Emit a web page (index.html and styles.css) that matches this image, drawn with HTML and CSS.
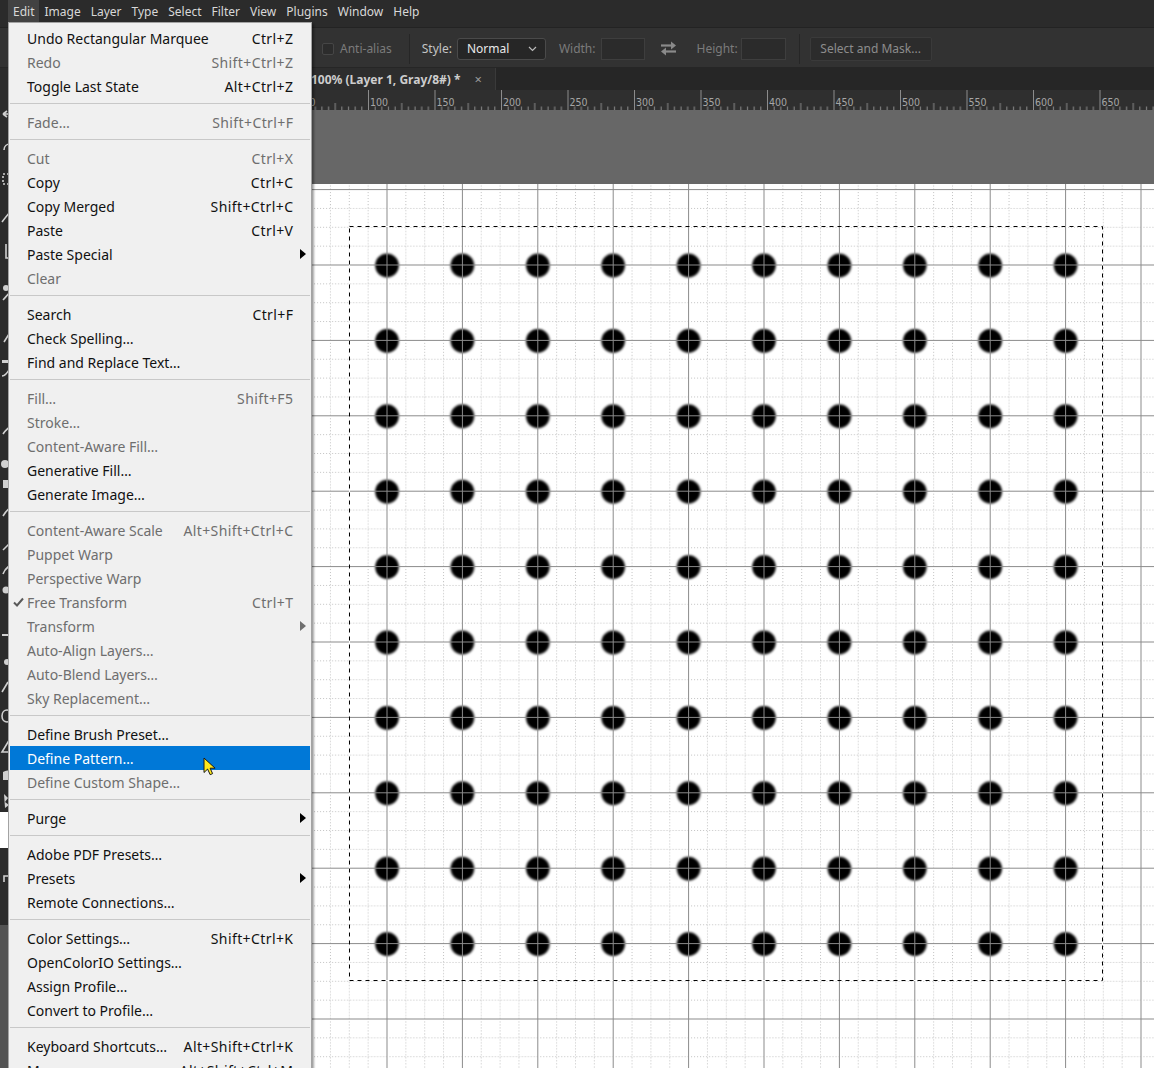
FILE: index.html
```html
<!DOCTYPE html>
<html lang="en">

<head>
    <meta charset="UTF-8">
    <title>Edit menu - Define Pattern</title>
    <link rel="stylesheet" href="styles.css">
</head>

<body>
    <div class="app">
        <div class="menubar">
            <div class="menubar-item open">Edit</div>
            <div class="menubar-item">Image</div>
            <div class="menubar-item">Layer</div>
            <div class="menubar-item">Type</div>
            <div class="menubar-item">Select</div>
            <div class="menubar-item">Filter</div>
            <div class="menubar-item">View</div>
            <div class="menubar-item">Plugins</div>
            <div class="menubar-item">Window</div>
            <div class="menubar-item">Help</div>
        </div>

        <div class="options">
            <span class="checkbox"></span>
            <span class="opt-label dim">Anti-alias</span>
            <span class="opt-divider"></span>
            <span class="opt-label">Style:</span>
            <div class="select">
                <span>Normal</span>
                <svg width="9" height="6" viewBox="0 0 9 6"><path d="M1 1l3.5 3.5L8 1" fill="none" stroke="#bbb" stroke-width="1.2"/></svg>
            </div>
            <span class="opt-label dim gap-l">Width:</span>
            <span class="field field-w"></span>
            <svg class="swap" width="17" height="15" viewBox="0 0 17 15">
                <path d="M1 4.5h12" stroke="#8a8a8a" stroke-width="2.2"/>
                <path d="M11 0.5l5 4-5 4z" fill="#8a8a8a"/>
                <path d="M16 10.5H4" stroke="#8a8a8a" stroke-width="2.2"/>
                <path d="M6 6.5l-5 4 5 4z" fill="#8a8a8a"/>
            </svg>
            <span class="opt-label dim gap-h">Height:</span>
            <span class="field field-h"></span>
            <span class="opt-divider last"></span>
            <div class="mask-button">Select and Mask...</div>
        </div>

        <div class="workspace">
            <div class="tools">
                <svg width="40" height="860" viewBox="0 0 40 860">
                    <g fill="none" stroke="#d0d0d0" stroke-width="1.6">
                        <path d="M3 10l4-3M3 10l4 3M3 10h14"/>
                        <path d="M4 46c0-8 12-8 12 0"/>
                        <path d="M3 70h12v10H3z" stroke-dasharray="2 2"/>
                        <path d="M2 118c3-4 6-8 10-12"/>
                        <path d="M6 140v14h12"/>
                        <path d="M3 196c2-2 5-6 9-10"/>
                        <path d="M4 238l5-8 5 8"/>
                        <path d="M2 272c3 0 6-4 8-8"/>
                        <path d="M3 330c2-3 6-7 10-9"/>
                        <path d="M3 412c3-5 7-9 12-12"/>
                        <path d="M3 446l8-8"/>
                        <path d="M3 470c2-6 8-10 12-10"/>
                        <path d="M2 588l6-10"/>
                        <path d="M2 612c0-8 10-8 10 0s-10 8-10 0"/>
                        <path d="M2 648l6-10 6 10z"/>
                        <path d="M4 778v-6h10v6"/>
                    </g>
                    <g fill="#d0d0d0">
                        <circle cx="6" cy="184" r="3"/>
                        <rect x="2" y="256" width="6" height="3"/>
                        <circle cx="5" cy="360" r="4"/>
                        <rect x="3" y="376" width="5" height="8"/>
                        <circle cx="6" cy="486" r="3.5"/>
                        <rect x="2" y="530" width="6" height="2"/>
                        <circle cx="7" cy="558" r="3"/>
                        <path d="M3 668c3-2 6-2 8 0v8H3z"/>
                        <path d="M4 690l4 4-3 4 4 3-4 3z"/>
                        <rect x="0" y="708" width="30" height="36" fill="#ffffff"/>
                    </g>
                </svg>
            </div>

            <div class="document">
                <div class="tabs">
                    <div class="tab">
                        <span class="tab-title">100% (Layer 1, Gray/8#) *</span>
                        <span class="tab-close">&times;</span>
                    </div>
                </div>

                <div class="rulers">
                    <div class="ruler-corner"></div>
                    <svg class="ruler-h" width="1094" height="20" viewBox="0 0 1094 20">
                        <defs>
                            <pattern id="ticks" patternUnits="userSpaceOnUse" x="42" y="0" width="66.5" height="20">
                                <g stroke="#8c8c8c" stroke-width="1">
                                    <path d="M0.5 0V20"/>
                                    <path d="M33.75 13V20"/>
                                    <path d="M7.15 16.5V20M13.8 16.5V20M20.45 16.5V20M27.1 16.5V20M40.4 16.5V20M47.05 16.5V20M53.7 16.5V20M60.35 16.5V20"/>
                                </g>
                            </pattern>
                        </defs>
                        <rect width="1094" height="20" fill="url(#ticks)"/>
                        <g class="ruler-labels">
                            <text x="177">0</text>
                            <text x="243.5">50</text>
                            <text x="310">100</text>
                            <text x="376.5">150</text>
                            <text x="443">200</text>
                            <text x="509.5">250</text>
                            <text x="576">300</text>
                            <text x="642.5">350</text>
                            <text x="709">400</text>
                            <text x="775.5">450</text>
                            <text x="842">500</text>
                            <text x="908.5">550</text>
                            <text x="975">600</text>
                            <text x="1041.5">650</text>
                        </g>
                    </svg>
                </div>

                <div class="stage">
                    <div class="ruler-v"></div>
                    <div class="pasteboard">
                        <svg class="canvas" width="842" height="884" viewBox="0 0 842 884">
                            <defs>
                                <pattern id="dots" patternUnits="userSpaceOnUse" x="37.3" y="43.8" width="75.4" height="75.4">
                                    <circle cx="37.7" cy="37.7" r="11.8" fill="#000"/>
                                </pattern>
                                <pattern id="grid" patternUnits="userSpaceOnUse" x="74.5" y="80.5" width="75.4" height="75.4">
                                    <g stroke="#c2c2c2" stroke-width="1" stroke-dasharray="1 2">
                                        <path d="M19.35 0V75.4M38.2 0V75.4M57.05 0V75.4"/>
                                        <path d="M0 19.35H75.4M0 38.2H75.4M0 57.05H75.4"/>
                                    </g>
                                    <g stroke="#8a8a8a" stroke-width="1">
                                        <path d="M0.5 0V75.4"/>
                                        <path d="M0 0.5H75.4"/>
                                    </g>
                                </pattern>
                                <filter id="soft" x="-5%" y="-5%" width="110%" height="110%">
                                    <feGaussianBlur stdDeviation="0.9"/>
                                </filter>
                            </defs>
                            <rect width="842" height="884" fill="#fff"/>
                            <rect x="37.3" y="43.8" width="754" height="754" fill="url(#dots)" filter="url(#soft)"/>
                            <rect width="842" height="884" fill="url(#grid)"/>
                            <rect x="37.5" y="42.5" width="753" height="754" fill="none" stroke="#fff" stroke-width="1"/>
                            <rect x="37.5" y="42.5" width="753" height="754" fill="none" stroke="#000" stroke-width="1" stroke-dasharray="4 4"/>
                        </svg>
                    </div>
                </div>
            </div>
        </div>

        <!-- open Edit menu -->
        <div class="edit-menu">
            <div class="menu-item"><span class="label">Undo Rectangular Marquee</span><span class="keys">Ctrl+Z</span></div>
            <div class="menu-item disabled"><span class="label">Redo</span><span class="keys">Shift+Ctrl+Z</span></div>
            <div class="menu-item"><span class="label">Toggle Last State</span><span class="keys">Alt+Ctrl+Z</span></div>
            <div class="menu-sep"></div>
            <div class="menu-item disabled"><span class="label">Fade…</span><span class="keys">Shift+Ctrl+F</span></div>
            <div class="menu-sep"></div>
            <div class="menu-item disabled"><span class="label">Cut</span><span class="keys">Ctrl+X</span></div>
            <div class="menu-item"><span class="label">Copy</span><span class="keys">Ctrl+C</span></div>
            <div class="menu-item"><span class="label">Copy Merged</span><span class="keys">Shift+Ctrl+C</span></div>
            <div class="menu-item"><span class="label">Paste</span><span class="keys">Ctrl+V</span></div>
            <div class="menu-item sub"><span class="label">Paste Special</span></div>
            <div class="menu-item disabled"><span class="label">Clear</span></div>
            <div class="menu-sep"></div>
            <div class="menu-item"><span class="label">Search</span><span class="keys">Ctrl+F</span></div>
            <div class="menu-item"><span class="label">Check Spelling…</span></div>
            <div class="menu-item"><span class="label">Find and Replace Text…</span></div>
            <div class="menu-sep"></div>
            <div class="menu-item disabled"><span class="label">Fill…</span><span class="keys">Shift+F5</span></div>
            <div class="menu-item disabled"><span class="label">Stroke…</span></div>
            <div class="menu-item disabled"><span class="label">Content-Aware Fill…</span></div>
            <div class="menu-item"><span class="label">Generative Fill…</span></div>
            <div class="menu-item"><span class="label">Generate Image…</span></div>
            <div class="menu-sep"></div>
            <div class="menu-item disabled"><span class="label">Content-Aware Scale</span><span class="keys">Alt+Shift+Ctrl+C</span></div>
            <div class="menu-item disabled"><span class="label">Puppet Warp</span></div>
            <div class="menu-item disabled"><span class="label">Perspective Warp</span></div>
            <div class="menu-item disabled">
                <svg class="check" width="11" height="10" viewBox="0 0 11 10"><path d="M1 5.5l3 3L10 1.5" fill="none" stroke="#5a5a5a" stroke-width="2"/></svg>
                <span class="label">Free Transform</span><span class="keys">Ctrl+T</span>
            </div>
            <div class="menu-item disabled sub"><span class="label">Transform</span></div>
            <div class="menu-item disabled"><span class="label">Auto-Align Layers…</span></div>
            <div class="menu-item disabled"><span class="label">Auto-Blend Layers…</span></div>
            <div class="menu-item disabled"><span class="label">Sky Replacement…</span></div>
            <div class="menu-sep"></div>
            <div class="menu-item"><span class="label">Define Brush Preset…</span></div>
            <div class="menu-item active"><span class="label">Define Pattern…</span></div>
            <div class="menu-item disabled"><span class="label">Define Custom Shape…</span></div>
            <div class="menu-sep"></div>
            <div class="menu-item sub"><span class="label">Purge</span></div>
            <div class="menu-sep"></div>
            <div class="menu-item"><span class="label">Adobe PDF Presets…</span></div>
            <div class="menu-item sub"><span class="label">Presets</span></div>
            <div class="menu-item"><span class="label">Remote Connections…</span></div>
            <div class="menu-sep"></div>
            <div class="menu-item"><span class="label">Color Settings…</span><span class="keys">Shift+Ctrl+K</span></div>
            <div class="menu-item"><span class="label">OpenColorIO Settings…</span></div>
            <div class="menu-item"><span class="label">Assign Profile…</span></div>
            <div class="menu-item"><span class="label">Convert to Profile…</span></div>
            <div class="menu-sep"></div>
            <div class="menu-item"><span class="label">Keyboard Shortcuts…</span><span class="keys">Alt+Shift+Ctrl+K</span></div>
            <div class="menu-item"><span class="label">Menus…</span><span class="keys">Alt+Shift+Ctrl+M</span></div>
        </div>

        <svg class="cursor" width="13" height="19" viewBox="0 0 13 19">
            <path d="M1 1v14.5l3.6-3.4 2.6 5.6 2.4-1.1-2.5-5.4h5z" fill="#ffe81a" stroke="#1a1a1a" stroke-width="1" stroke-linejoin="round"/>
        </svg>
    </div>
</body>

</html>
```

FILE: styles.css
```css
body {
    margin: 0;
    background: #535353;
    font-family: "Noto Sans", "Open Sans", sans-serif;
    overflow: hidden;
}

.app {
    position: relative;
    width: 1154px;
    height: 1068px;
    display: flex;
    flex-direction: column;
    overflow: hidden;
}

/* top menu bar */
.menubar {
    height: 28px;
    box-sizing: border-box;
    background: #2b2b2b;
    border-bottom: 1px solid #232323;
    display: flex;
    align-items: flex-start;
    padding-left: 8px;
}

.menubar-item {
    height: 23px;
    line-height: 23px;
    padding: 0 5px;
    font-size: 12px;
    color: #d8d8d8;
}

.menubar-item.open {
    background: #424242;
}

/* tool options bar */
.options {
    height: 40px;
    box-sizing: border-box;
    background: #323232;
    border-bottom: 1px solid #262626;
    display: flex;
    align-items: center;
    padding: 2px 0 0 322px;
    font-size: 12px;
}

.checkbox {
    width: 10px;
    height: 10px;
    border: 1px solid #464646;
    border-radius: 2px;
    background: #2c2c2c;
    margin-right: 6px;
}

.opt-label {
    color: #c4c4c4;
}

.opt-label.dim {
    color: #7b7b7b;
}

.opt-divider {
    width: 1px;
    height: 30px;
    background: #262626;
    margin: 0 12px 0 17px;
}

.opt-divider.last {
    margin: 0 12px 0 13px;
}

.select {
    width: 89px;
    height: 22px;
    box-sizing: border-box;
    margin-left: 5px;
    padding: 0 8px 0 9px;
    border: 1px solid #4a4a4a;
    border-radius: 3px;
    background: #262626;
    color: #e8e8e8;
    display: flex;
    align-items: center;
    justify-content: space-between;
}

.gap-l {
    margin-left: 13px;
}

.gap-h {
    margin-left: 20px;
}

.field {
    width: 44px;
    height: 22px;
    box-sizing: border-box;
    border: 1px solid #3e3e3e;
    background: #2b2b2b;
}

.field-w {
    margin-left: 5px;
}

.field-h {
    width: 45px;
    margin-left: 3px;
}

.swap {
    margin-left: 15px;
}

.mask-button {
    height: 24px;
    width: 122px;
    box-sizing: border-box;
    margin-left: -2px;
    border: 1px solid #3a3a3a;
    border-radius: 2px;
    background: #2c2c2c;
    color: #8c8c8c;
    display: flex;
    align-items: center;
    justify-content: center;
}

/* tools + document */
.workspace {
    flex: 1;
    display: flex;
    min-height: 0;
}

.tools {
    width: 40px;
    height: 857px;
    background: #2b2b2b;
    flex-shrink: 0;
}

.tools svg {
    display: block;
    margin-top: 36px;
}

.document {
    flex: 1;
    display: flex;
    flex-direction: column;
    min-width: 0;
}

.tabs {
    height: 22px;
    box-sizing: border-box;
    background: #262626;
    display: flex;
}

.tab {
    display: flex;
    align-items: center;
    padding: 0 13px 0 271px;
    background: #2d2d2d;
    border-right: 1px solid #3a3a3a;
}

.tab-title {
    font-size: 12px;
    font-weight: bold;
    color: #cdcdcd;
}

.tab-close {
    margin-left: 14px;
    font-size: 13px;
    color: #9a9a9a;
}

.rulers {
    height: 20px;
    display: flex;
    background: #2f2f2f;
}

.ruler-corner {
    width: 20px;
    background: #2f2f2f;
}

.ruler-h {
    display: block;
}

.ruler-labels text {
    font-family: "DejaVu Sans Condensed", "DejaVu Sans", sans-serif;
    font-stretch: condensed;
    font-size: 10.5px;
    fill: #a6a6a6;
    transform: translateY(16px);
}

.stage {
    flex: 1;
    display: flex;
    min-height: 0;
}

.ruler-v {
    width: 20px;
    background: #2f2f2f;
}

.pasteboard {
    flex: 1;
    background: #676767;
    padding: 74px 0 0 252px;
    overflow: hidden;
}

.canvas {
    display: block;
}

/* the open Edit menu */
.edit-menu {
    position: absolute;
    left: 8px;
    top: 22px;
    width: 304px;
    box-sizing: border-box;
    padding: 3px 1px;
    background: #f0f0f0;
    border: 1px solid #a3a3a3;
    box-shadow: 2px 2px 2px rgba(0, 0, 0, 0.35);
    font-size: 14px;
}

.menu-item {
    position: relative;
    height: 24px;
    display: flex;
    align-items: center;
    padding: 0 17px;
    color: #111;
    white-space: nowrap;
}

.menu-item .label {
    flex: 1;
}

.menu-item .keys {
    letter-spacing: 0.4px;
    margin-right: -0.4px;
}

.menu-item.disabled {
    color: #6e6e6e;
}

.menu-item.active {
    background: #0078d7;
    color: #fff;
}

.menu-item.sub::after {
    content: "";
    position: absolute;
    right: 4px;
    top: 7px;
    border-left: 6px solid #000;
    border-top: 5px solid transparent;
    border-bottom: 5px solid transparent;
}

.menu-item.disabled.sub::after {
    border-left-color: #6e6e6e;
}

.check {
    position: absolute;
    left: 3px;
    top: 7px;
}

.menu-sep {
    height: 1px;
    margin: 5px 0 6px;
    background: #c8c8c8;
}

.cursor {
    position: absolute;
    left: 203px;
    top: 757px;
}
```
